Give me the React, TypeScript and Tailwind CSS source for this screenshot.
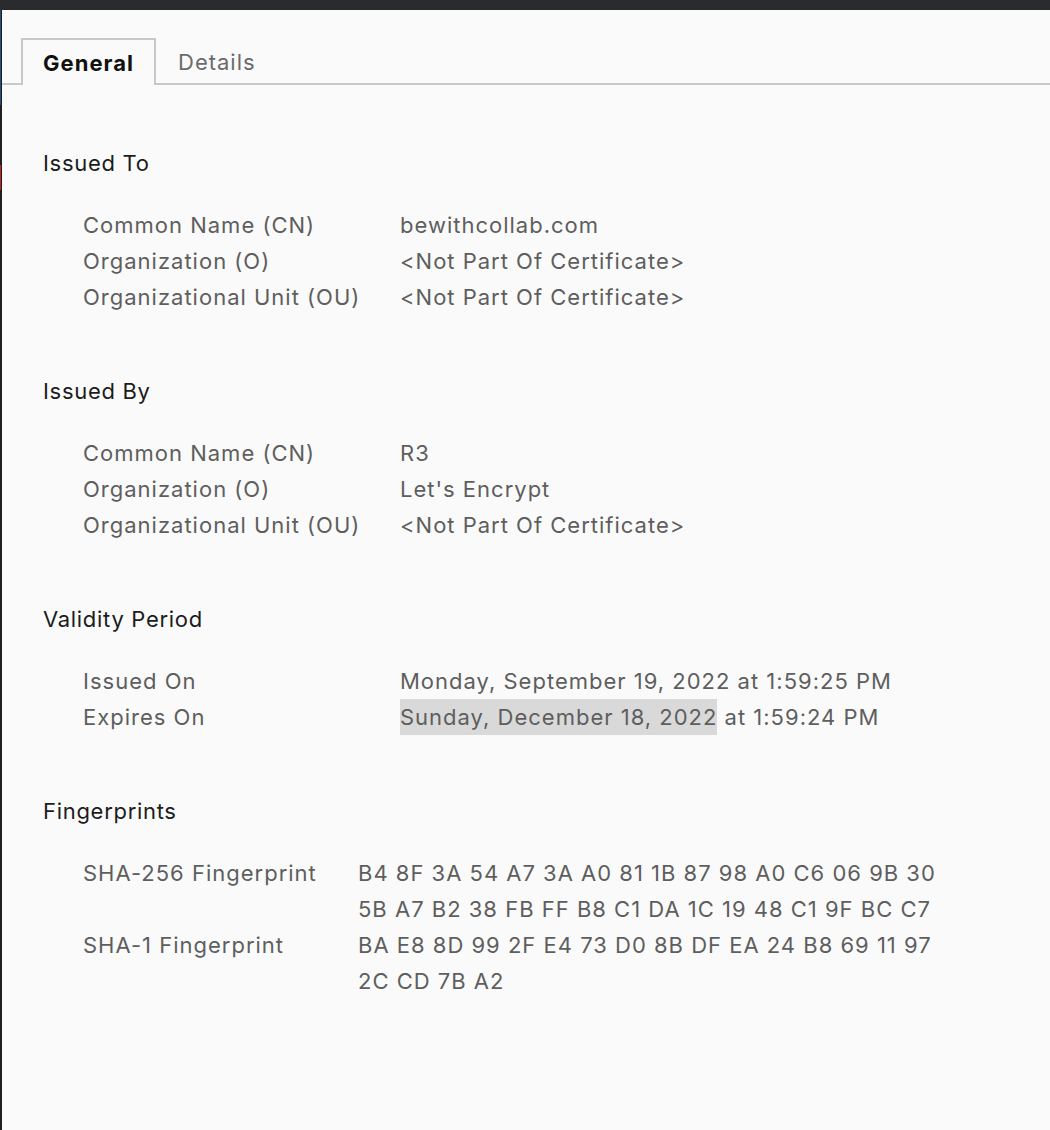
export default function App() {
  const sections = [
    {
      title: "Issued To",
      rows: [
        ["Common Name (CN)", "bewithcollab.com"],
        ["Organization (O)", "<Not Part Of Certificate>"],
        ["Organizational Unit (OU)", "<Not Part Of Certificate>"],
      ],
    },
    {
      title: "Issued By",
      rows: [
        ["Common Name (CN)", "R3"],
        ["Organization (O)", "Let's Encrypt"],
        ["Organizational Unit (OU)", "<Not Part Of Certificate>"],
      ],
    },
  ];

  return (
    <div
      className="flex h-[1130px] w-[1050px] flex-col overflow-hidden bg-[#fafafa] text-[22px] tracking-[1px]"
      style={{ fontFamily: "Inter, 'Liberation Sans', sans-serif" }}
    >
      {/* window top strip */}
      <div className="h-[10px] shrink-0 bg-[#2a2b2f]" />

      <div className="flex flex-1">
        {/* left edge of the window behind */}
        <div className="flex w-[2px] shrink-0 flex-col bg-[#1e1f22]">
          <div className="h-[95px] w-px bg-[#1f4f7a]" />
          <div className="h-[60px]" />
          <div className="h-[25px] w-px bg-[#c81e1e]" />
        </div>

        <div className="flex flex-1 flex-col">
          {/* tabs */}
          <div className="mt-[28px] flex h-[47px] items-end">
            <div className="w-[19px] self-stretch border-b-2 border-[#c8c8c8]" />
            <div className="flex h-[47px] w-[135px] items-center justify-center border-x-2 border-t-2 border-[#c8c8c8] pt-[2px] font-bold text-[#111]">
              General
            </div>
            <div className="flex flex-1 self-stretch border-b-2 border-[#c8c8c8]">
              <div className="flex items-center pl-[22px] pt-[4px] text-[#6b6b6b]">Details</div>
            </div>
          </div>

          <div className="flex flex-col pl-[41px] pt-[60px] leading-[36px]">
            {sections.map((s) => (
              <div key={s.title} className="mb-[58px] flex flex-col">
                <div className="tracking-[0.7px] text-[#1c1c1c]">{s.title}</div>
                <div className="mt-[26px] flex flex-col pl-[40px] text-[#5e5e5e]">
                  {s.rows.map(([k, v]) => (
                    <div key={k} className="flex">
                      <div className="w-[317px] shrink-0">{k}</div>
                      <div>{v}</div>
                    </div>
                  ))}
                </div>
              </div>
            ))}

            <div className="mb-[58px] flex flex-col">
              <div className="tracking-[0.7px] text-[#1c1c1c]">Validity Period</div>
              <div className="mt-[26px] flex flex-col pl-[40px] text-[#5e5e5e]">
                <div className="flex">
                  <div className="w-[317px] shrink-0">Issued On</div>
                  <div>Monday, September 19, 2022 at 1:59:25 PM</div>
                </div>
                <div className="flex">
                  <div className="w-[317px] shrink-0">Expires On</div>
                  <div>
                    <span className="inline-block bg-[#d9d9d9]">Sunday, December 18, 2022</span> at 1:59:24 PM
                  </div>
                </div>
              </div>
            </div>

            <div className="flex flex-col">
              <div className="tracking-[0.7px] text-[#1c1c1c]">Fingerprints</div>
              <div className="mt-[26px] flex flex-col pl-[40px] text-[#5e5e5e]">
                <div className="flex">
                  <div className="w-[275px] shrink-0">SHA-256 Fingerprint</div>
                  <div className="flex flex-col">
                    <span>B4 8F 3A 54 A7 3A A0 81 1B 87 98 A0 C6 06 9B 30</span>
                    <span>5B A7 B2 38 FB FF B8 C1 DA 1C 19 48 C1 9F BC C7</span>
                  </div>
                </div>
                <div className="flex">
                  <div className="w-[275px] shrink-0">SHA-1 Fingerprint</div>
                  <div className="flex flex-col">
                    <span>BA E8 8D 99 2F E4 73 D0 8B DF EA 24 B8 69 11 97</span>
                    <span>2C CD 7B A2</span>
                  </div>
                </div>
              </div>
            </div>
          </div>
        </div>
      </div>
    </div>
  );
}
